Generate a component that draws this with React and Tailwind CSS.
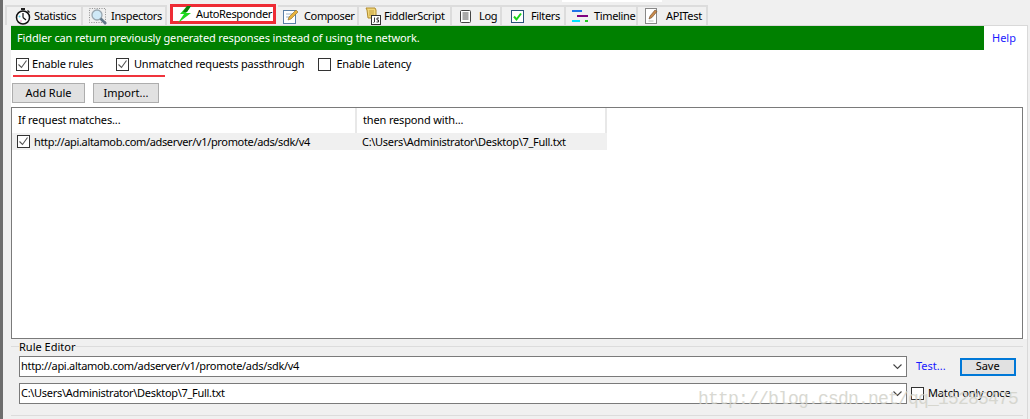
import React from "react"

const font = { fontFamily: '"Noto Sans", "Liberation Sans", sans-serif' }

function Stopwatch() {
  return (
    <svg width="16" height="17" viewBox="0 0 16 17">
      <rect x="6" y="0" width="4" height="2" fill="#222" />
      <path d="M12.5 2.5l2 2" stroke="#222" strokeWidth="1.4" />
      <circle cx="8" cy="9.5" r="6.5" fill="#fff" stroke="#111" strokeWidth="1.5" />
      <path d="M8 9.5V5M8 9.5l3 2.5" stroke="#111" strokeWidth="1.2" fill="none" />
      <circle cx="4.5" cy="8.5" r="1" fill="#49c6e5" />
      <circle cx="6" cy="13" r="0.8" fill="#e58ab5" />
    </svg>
  )
}

function Magnifier() {
  return (
    <svg width="19" height="17" viewBox="0 0 19 17">
      <rect x="0.5" y="0.5" width="16" height="14" fill="none" stroke="#8d8d8d" strokeDasharray="1 1.4" />
      <circle cx="8" cy="7" r="5" fill="#cfe9f7" stroke="#9aa7b0" strokeWidth="1.3" />
      <path d="M11.5 10.5l5.5 5.5" stroke="#62788a" strokeWidth="2.6" />
    </svg>
  )
}

function Bolt() {
  return (
    <svg width="14" height="17" viewBox="0 0 14 17">
      <path d="M9 0L2 8h4L0 17l13-10H8l5-7z" fill="#1ed81e" />
      <path d="M9 0L5 6h4l4-6z" fill="#0b7a0b" />
    </svg>
  )
}

function Pencil() {
  return (
    <svg width="16" height="16" viewBox="0 0 16 16">
      <rect x="0.5" y="2.5" width="12" height="13" fill="#fff" stroke="#5b7fa6" />
      <path d="M3 6h7M3 9h4" stroke="#9fb6cc" />
      <path d="M5 12l1-3 7-7 2 2-7 7z" fill="#e8b23c" stroke="#8a6a25" strokeWidth="0.6" />
    </svg>
  )
}

function Scroll() {
  return (
    <svg width="16" height="18" viewBox="0 0 16 18">
      <path d="M1 1h9l1 2v8H3L2 3z" fill="#f2d77a" stroke="#b08a2a" />
      <path d="M4 4h5M4 6h5M4 8h5" stroke="#b08a2a" strokeWidth="0.7" />
      <rect x="6.5" y="8.5" width="9" height="9" fill="#fff" stroke="#333" />
      <path d="M9.5 10.5v4.5l-1 .5M14 11h-2v2h1.5v2h-2" stroke="#222" strokeWidth="0.9" fill="none" />
    </svg>
  )
}

function LogIcon() {
  return (
    <svg width="11" height="13" viewBox="0 0 11 13">
      <rect x="0.5" y="0.5" width="10" height="12" rx="1" fill="#fff" stroke="#444" />
      <path d="M2.5 3h6M2.5 5h6M2.5 7h6M2.5 9h6" stroke="#555" />
    </svg>
  )
}

function FilterIcon() {
  return (
    <svg width="13" height="13" viewBox="0 0 13 13">
      <rect x="0.5" y="0.5" width="12" height="12" fill="#fff" stroke="#28527a" />
      <path d="M3 6.5l2.5 3L10 3.5" stroke="#19d419" strokeWidth="2" fill="none" />
    </svg>
  )
}

function TimelineIcon() {
  return (
    <svg width="16" height="13" viewBox="0 0 16 13">
      <rect x="0" y="0" width="10" height="2" fill="#1e73e8" />
      <rect x="5" y="5" width="11" height="2" fill="#800080" />
      <rect x="0" y="10" width="8" height="2" fill="#00e5ff" />
      <rect x="13" y="10" width="3" height="2" fill="#22cc22" />
    </svg>
  )
}

function ApiIcon() {
  return (
    <svg width="14" height="16" viewBox="0 0 14 16">
      <rect x="0.5" y="0.5" width="11" height="15" fill="#fff" stroke="#888" />
      <path d="M4 11l1-3 5-6 2 1.5-5 6z" fill="#c98a4b" stroke="#6a4a2a" strokeWidth="0.6" />
      <path d="M3.5 13h5" stroke="#bbb" />
    </svg>
  )
}

function Check({ checked, className = "" }) {
  return (
    <span className={`flex h-[13px] w-[13px] shrink-0 items-center justify-center border border-[#333] bg-white ${className}`}>
      {checked && (
        <svg width="11" height="11" viewBox="0 0 11 11">
          <path d="M1.5 5.5l3 3 5-7" stroke="#555" strokeWidth="1.1" fill="none" />
        </svg>
      )}
    </span>
  )
}

function Chevron() {
  return (
    <svg width="9" height="6" viewBox="0 0 9 6" className="shrink-0">
      <path d="M0.5 0.5l4 4 4-4" stroke="#444" strokeWidth="1.1" fill="none" />
    </svg>
  )
}

const tabs = [
  { label: "Statistics", icon: <Stopwatch />, cls: "w-[78px] pl-[8px] gap-[3px] border-l-2" },
  { label: "Inspectors", icon: <Magnifier />, cls: "w-[84px] pl-[6px] gap-[3px]" },
  { label: "AutoResponder", icon: <Bolt />, active: true },
  { label: "Composer", icon: <Pencil />, cls: "w-[81px] pl-[5px] gap-[5px]" },
  { label: "FiddlerScript", icon: <Scroll />, cls: "w-[93px] pl-[6px] gap-[3px]" },
  { label: "Log", icon: <LogIcon />, cls: "w-[50px] pl-[8px] gap-[8px]" },
  { label: "Filters", icon: <FilterIcon />, cls: "w-[64px] pl-[9px] gap-[7px]" },
  { label: "Timeline", icon: <TimelineIcon />, cls: "w-[72px] pl-[6px] gap-[6px]" },
  { label: "APITest", icon: <ApiIcon />, cls: "w-[70px] pl-[7px] gap-[7px]" },
]

function Tab({ tab }) {
  if (tab.active) {
    return (
      <div className="z-10 mr-[2px] mb-[1px] ml-[3px] flex h-[20px] w-[106px] items-center gap-[4px] border-[3px] border-[#ee2c35] bg-white pl-[5px] text-[11px] tracking-[-0.35px] text-black">
        {tab.icon}
        <span>{tab.label}</span>
      </div>
    )
  }
  return (
    <div className={`flex h-[20px] items-center ${tab.cls} border-t-2 border-r-2 border-[#dcdcdc] text-[11px] tracking-[-0.35px] text-black`}>
      {tab.icon}
      <span>{tab.label}</span>
    </div>
  )
}

function Button({ children, className = "" }) {
  return (
    <div className={`flex h-[20px] items-center justify-center border border-[#adadad] bg-[#e1e1e1] text-[11px] text-black ${className}`}>
      {children}
    </div>
  )
}

function Combo({ value, className = "" }) {
  return (
    <div className={`flex h-[21px] w-[888px] items-center justify-between border border-[#7a7a7a] bg-white pl-[1px] pr-[4px] text-[11px] text-black ${className}`}>
      <span className="tracking-[-0.3px]">{value}</span>
      <Chevron />
    </div>
  )
}

export default function App() {
  return (
    <div className="relative flex h-[419px] w-[1030px] overflow-hidden bg-[#f0f0f0]" style={font}>
      <div className="w-[3px] shrink-0 bg-[#6d6d6d]" />
      <div className="absolute top-0 left-[562px] h-[2px] w-[100px] bg-white" />

      <div className="ml-[2px] flex min-w-0 flex-1 flex-col">
        {/* tab strip */}
        <div className="flex h-[25px] items-end">
          {tabs.map((tab) => (
            <Tab key={tab.label} tab={tab} />
          ))}
        </div>

        <div className="ml-[6px] mr-[2px] flex h-[394px] flex-col border-t border-r border-[#d9d9d9] bg-white">
          <div className="flex h-[24px] shrink-0 items-center">
            <div className="flex h-[24px] w-[973px] items-center bg-[#008000] pl-[6px] text-[11px] tracking-[-0.14px] text-white">
              Fiddler can return previously generated responses instead of using the network.
            </div>
            <span className="ml-[8px] text-[11px] text-[#1a1aff]">Help</span>
          </div>

          <div className="flex h-[25px] shrink-0 items-center pt-[4px] pl-[5px] text-[11px] tracking-[-0.2px] text-black">
            <Check checked />
            <span className="ml-[3px]">Enable rules</span>
            <Check checked className="ml-[23px]" />
            <span className="ml-[5px]">Unmatched requests passthrough</span>
            <Check className="ml-[14px]" />
            <span className="ml-[5px]">Enable Latency</span>
          </div>

          {/* red underline from the annotation */}
          <div className="ml-[2px] h-[2px] w-[152px] shrink-0 bg-[#f0343c]" />

          <div className="mt-[6px] flex shrink-0 gap-[8px] pl-[1px]">
            <Button className="w-[73px]">Add Rule</Button>
            <Button className="w-[66px]">Import...</Button>
          </div>

          {/* rules list */}
          <div className="mt-[4px] mr-[4px] h-[232px] shrink-0 border border-[#7a7a7a] bg-white text-[11px] text-black">
            <div className="flex h-[25px] w-[595px] tracking-[-0.15px]">
              <div className="flex w-[345px] items-center border-r-2 border-[#e8e8e8] pl-[6px]">If request matches...</div>
              <div className="flex flex-1 items-center border-r-2 border-[#e8e8e8] pl-[6px]">then respond with...</div>
            </div>
            <div className="flex h-[17px] w-[595px] items-center bg-[#f0f0f0] tracking-[-0.3px]">
              <div className="flex w-[345px] items-center pl-[5px]">
                <Check checked />
                <span className="ml-[4px] pt-[1px] tracking-[-0.34px]">http://api.altamob.com/adserver/v1/promote/ads/sdk/v4</span>
              </div>
              <div className="pt-[1px] pl-[5px]">C:\Users\Administrator\Desktop\7_Full.txt</div>
            </div>
          </div>

          {/* rule editor */}
          <div className="flex-1 bg-[#f0f0f0] pt-[7px]">
            <div className="relative mr-[4px] h-[70px] border-t border-b border-[#dcdcdc] pl-[8px] pt-[9px] text-[11px] text-black">
              <span className="absolute -top-[7px] left-[8px] bg-[#f0f0f0] leading-[13px]">Rule Editor</span>
              <div className="flex items-center">
                <Combo value="http://api.altamob.com/adserver/v1/promote/ads/sdk/v4" />
                <span className="ml-[9px] text-[#1a1aff]">Test...</span>
                <Button className="ml-[14px] !h-[18px] w-[56px] !border-2 !border-[#0078d7]">Save</Button>
              </div>
              <div className="mt-[6px] flex items-center">
                <Combo value="C:\Users\Administrator\Desktop\7_Full.txt" />
                <Check className="ml-[4px]" />
                <span className="ml-[4px] tracking-[-0.15px]">Match only once</span>
              </div>
            </div>
          </div>
        </div>
      </div>

      {/* csdn watermark */}
      <div
        className="absolute top-[386px] left-[698px] whitespace-nowrap text-[18px] tracking-[-0.8px] text-[#d0d0c8] opacity-80"
        style={{ fontFamily: '"Liberation Mono", monospace' }}
      >
        http://blog.csdn.net/qq_15285475
      </div>
    </div>
  )
}
